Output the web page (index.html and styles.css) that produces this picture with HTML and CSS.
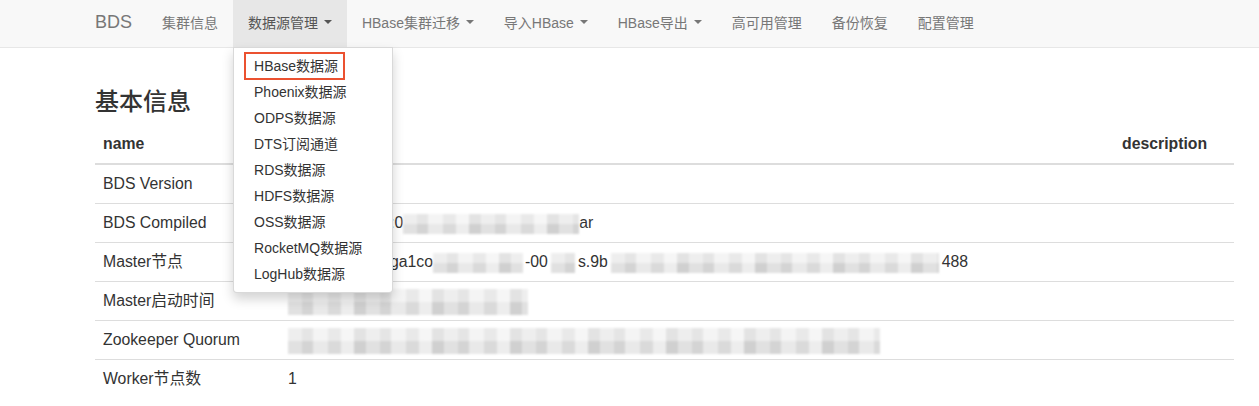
FILE: index.html
```html
<!DOCTYPE html>
<html lang="zh-CN">
<head>
    <meta charset="UTF-8">
    <meta name="viewport" content="width=device-width, initial-scale=1.0">
    <title>BDS</title>
    <link rel="stylesheet" href="styles.css">
</head>
<body>
    <nav class="navbar">
        <div class="nav-inner">
            <a class="brand" href="#">BDS</a>
            <ul class="nav">
                <li><a href="#">集群信息</a></li>
                <li class="open">
                    <a href="#">数据源管理 <span class="caret"></span></a>
                    <ul class="dropdown">
                        <li class="picked"><a href="#">HBase数据源</a></li>
                        <li><a href="#">Phoenix数据源</a></li>
                        <li><a href="#">ODPS数据源</a></li>
                        <li><a href="#">DTS订阅通道</a></li>
                        <li><a href="#">RDS数据源</a></li>
                        <li><a href="#">HDFS数据源</a></li>
                        <li><a href="#">OSS数据源</a></li>
                        <li><a href="#">RocketMQ数据源</a></li>
                        <li><a href="#">LogHub数据源</a></li>
                    </ul>
                </li>
                <li><a href="#">HBase集群迁移 <span class="caret"></span></a></li>
                <li><a href="#">导入HBase <span class="caret"></span></a></li>
                <li><a href="#">HBase导出 <span class="caret"></span></a></li>
                <li><a href="#">高可用管理</a></li>
                <li><a href="#">备份恢复</a></li>
                <li><a href="#">配置管理</a></li>
            </ul>
        </div>
    </nav>

    <div class="container">
        <h3>基本信息</h3>
        <table class="info">
            <thead>
                <tr>
                    <th class="col-name">name</th>
                    <th></th>
                    <th class="col-desc">description</th>
                </tr>
            </thead>
            <tbody>
                <tr>
                    <td>BDS Version</td>
                    <td><span class="mask m-ver"></span></td>
                    <td></td>
                </tr>
                <tr>
                    <td>BDS Compiled</td>
                    <td><span class="mask m-hide"></span>:0<span class="mask m-date"></span>ar</td>
                    <td></td>
                </tr>
                <tr>
                    <td>Master节点</td>
                    <td><span class="mask m-hide"></span>ga1co<span class="mask m-host1"></span>-00<span class="mask m-host2"></span>s.9b<span class="mask m-host3"></span>488</td>
                    <td></td>
                </tr>
                <tr>
                    <td>Master启动时间</td>
                    <td><span class="mask tall m-time"></span></td>
                    <td></td>
                </tr>
                <tr>
                    <td>Zookeeper Quorum</td>
                    <td><span class="mask tall m-zk"></span></td>
                    <td></td>
                </tr>
                <tr>
                    <td>Worker节点数</td>
                    <td>1</td>
                    <td></td>
                </tr>
            </tbody>
        </table>
    </div>
</body>
</html>
```

FILE: styles.css
```css
body{
    margin: 0;
    font-family: "Liberation Sans", "Noto Sans CJK SC", sans-serif;
    color: #333;
    background-color: #fff;
}

a{
    text-decoration: none;
}

/* top bar */
.navbar{
    height: 47px;
    background-color: #f8f8f8;
    border-bottom: 1px solid #e7e7e7;
}

.nav-inner{
    display: flex;
    height: 100%;
    padding-left: 80px;
}

.brand{
    display: flex;
    align-items: center;
    padding: 0 15px 3px;
    font-size: 18px;
    color: #777;
}

.nav{
    display: flex;
    margin: 0;
    padding: 0;
    list-style: none;
}

.nav > li{
    position: relative;
}

.nav > li > a{
    display: flex;
    align-items: center;
    box-sizing: border-box;
    height: 47px;
    padding: 0 15px 3px;
    font-size: 14px;
    color: #777;
    white-space: pre;
}

.nav > li.open > a{
    background-color: #e7e7e7;
    color: #555;
}

.caret{
    display: inline-block;
    width: 0;
    height: 0;
    margin-left: 2px;
    border-top: 4px solid;
    border-right: 4px solid transparent;
    border-left: 4px solid transparent;
}

/* dropdown of the open item */
.dropdown{
    position: absolute;
    top: 47px;
    left: 0;
    z-index: 10;
    min-width: 158px;
    margin: 0;
    padding: 5px 0;
    list-style: none;
    background-color: #fff;
    border: 1px solid rgba(0, 0, 0, 0.15);
    border-radius: 0 0 4px 4px;
    box-shadow: 0 6px 12px rgba(0, 0, 0, 0.175);
}

.dropdown a{
    display: block;
    padding: 3px 20px;
    font-size: 14px;
    line-height: 20px;
    color: #333;
    white-space: nowrap;
}

.dropdown .picked{
    position: relative;
}

.dropdown .picked::after{
    content: "";
    position: absolute;
    top: -1px;
    bottom: -1px;
    left: 10px;
    width: 97px;
    border: 2px solid #eb5130;
}

/* page body */
.container{
    width: 1139px;
    margin-left: 95px;
    padding-top: 21px;
}

h3{
    margin: 20px 0 10px;
    font-size: 24px;
    font-weight: 500;
    line-height: 26px;
}

.info{
    width: 100%;
    border-collapse: collapse;
    font-size: 15.8px;
    line-height: 22px;
}

.info th,
.info td{
    padding: 8px;
    text-align: left;
    vertical-align: middle;
    border-top: 1px solid #ddd;
    white-space: nowrap;
}

.info thead th{
    border-top: 0;
    border-bottom: 2px solid #ddd;
    font-weight: bold;
}

.col-name{
    width: 169px;
}

.col-desc{
    width: 104px;
}

/* masked values */
.mask{
    display: inline-block;
    height: 20px;
    margin: -2px 0;
    vertical-align: middle;
    background:
        linear-gradient(180deg, rgba(255, 255, 255, 0.35) 0 50%, rgba(0, 0, 0, 0.02) 50%),
        repeating-linear-gradient(90deg, #e6e6e6 0 14px, #d8d8d8 14px 25px, #eeeeee 25px 40px, #dedede 40px 53px, #f2f2f2 53px 66px, #d4d4d4 66px 78px);
    filter: blur(0.8px);
}

.mask.tall{
    height: 26px;
    margin: -5px 0;
}

.m-ver{ width: 100px; }
.m-hide{ width: 102px; }
.m-date{ width: 176px; }
.m-host1{ width: 90px; margin-right: 2px; }
.m-host2{ width: 24px; margin: 0 3px; }
.m-host3{ width: 328px; margin: 0 3px; }
.m-time{ width: 240px; }
.m-zk{ width: 592px; }
```
